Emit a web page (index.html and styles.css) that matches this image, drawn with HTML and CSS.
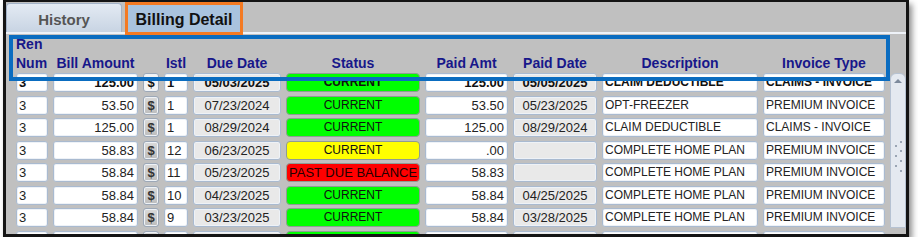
FILE: index.html
```html
<!DOCTYPE html>
<html lang="en">
<head>
  <meta charset="UTF-8">
  <title>Billing Detail</title>
  <link rel="stylesheet" href="styles.css">
</head>
<body>

  <div class="frame">
    <div class="tabs">
      <div class="tab">History</div>
      <div class="tab active">Billing Detail</div>
    </div>

    <div class="panel">
      <div class="highlight"></div>

      <div class="table-wrap">
        <div class="table">
          <div class="grid head">
            <div class="left">Ren<br>Num</div>
            <div>Bill Amount</div>
            <div></div>
            <div>Istl</div>
            <div>Due Date</div>
            <div>Status</div>
            <div>Paid Amt</div>
            <div>Paid Date</div>
            <div>Description</div>
            <div>Invoice Type</div>
          </div>
          <div class="rows" id="rows"></div>
        </div>

        <div class="scrollbar">
          <div class="sb-up"></div>
          <svg class="sb-grip" width="14" height="34" viewBox="0 0 14 34">
            <g fill="#9aa5b4">
              <rect x="9" y="0" width="2" height="2"/>
              <rect x="4" y="4" width="2" height="2"/>
              <rect x="9" y="9" width="2" height="2"/>
              <rect x="4" y="14" width="2" height="2"/>
              <rect x="9" y="19" width="2" height="2"/>
              <rect x="4" y="24" width="2" height="2"/>
              <rect x="9" y="29" width="2" height="2"/>
            </g>
          </svg>
        </div>
      </div>
    </div>
  </div>

  <script>
    // billing rows: ren, bill, istl, due, status, color, paid, paidDate, desc, invoice
    const billingData = [
      ['3', '125.00', '1', '05/03/2025', 'CURRENT', 'green', '125.00', '05/05/2025', 'CLAIM DEDUCTIBLE', 'CLAIMS - INVOICE'],
      ['3', '53.50', '1', '07/23/2024', 'CURRENT', 'green', '53.50', '05/23/2025', 'OPT-FREEZER', 'PREMIUM INVOICE'],
      ['3', '125.00', '1', '08/29/2024', 'CURRENT', 'green', '125.00', '08/29/2024', 'CLAIM DEDUCTIBLE', 'CLAIMS - INVOICE'],
      ['3', '58.83', '12', '06/23/2025', 'CURRENT', 'yellow', '.00', '', 'COMPLETE HOME PLAN', 'PREMIUM INVOICE'],
      ['3', '58.84', '11', '05/23/2025', 'PAST DUE BALANCE', 'red', '58.83', '', 'COMPLETE HOME PLAN', 'PREMIUM INVOICE'],
      ['3', '58.84', '10', '04/23/2025', 'CURRENT', 'green', '58.84', '04/25/2025', 'COMPLETE HOME PLAN', 'PREMIUM INVOICE'],
      ['3', '58.84', '9', '03/23/2025', 'CURRENT', 'green', '58.84', '03/28/2025', 'COMPLETE HOME PLAN', 'PREMIUM INVOICE'],
      // next row is cut off by the window edge, only its top shows
      ['', '', '', '', '', 'green', '', '', '', '']
    ];

    function makeCell(text, className) {
      const cell = document.createElement('div');
      cell.className = 'cell ' + className;
      cell.textContent = text;
      return cell;
    }

    function renderRows() {
      const rowsContainer = document.getElementById('rows');
      rowsContainer.innerHTML = '';

      billingData.forEach((r, i) => {
        const row = document.createElement('div');
        row.classList.add('grid', 'row');
        if (i === 0) row.classList.add('selected');

        row.appendChild(makeCell(r[0], ''));
        row.appendChild(makeCell(r[1], 'num'));
        row.appendChild(makeCell(r[0] ? '$' : '', 'dollar'));
        row.appendChild(makeCell(r[2], ''));
        row.appendChild(makeCell(r[3], 'gray'));
        row.appendChild(makeCell(r[4], 'status ' + r[5]));
        row.appendChild(makeCell(r[6], 'num'));
        row.appendChild(makeCell(r[7], 'gray'));
        row.appendChild(makeCell(r[8], 'upper'));
        row.appendChild(makeCell(r[9], 'upper'));

        rowsContainer.appendChild(row);
      });
    }

    renderRows();
  </script>

</body>
</html>
```

FILE: styles.css
```css
body {
  margin: 0;
  background-color: #fff;
  font-family: "Liberation Sans", Arial, sans-serif;
}

.frame {
  margin-left: 3px;
  width: 906px;
  height: 237px;
  box-sizing: border-box;
  border: 3px solid #141414;
  border-top-width: 2px;
  background-color: #c0c0c0;
  box-shadow: 3px 4px 6px rgba(0, 0, 0, 0.45);
  overflow: hidden;
}

/* tabs */
.tabs {
  display: flex;
  align-items: flex-start;
  height: 30px;
}

.tab {
  margin-top: 1px;
  width: 116px;
  height: 29px;
  box-sizing: border-box;
  padding-top: 2px;
  display: flex;
  align-items: center;
  justify-content: center;
  font-size: 15px;
  font-weight: bold;
  color: #555;
  background: linear-gradient(#e3eaf3, #c8d4e3);
  border: 1px solid #a3b3c8;
  border-bottom: none;
  border-radius: 4px 4px 0 0;
}

.tab.active {
  margin-top: 0;
  margin-left: 3px;
  width: 118px;
  height: 33px;
  border: 3px solid #f47a22;
  border-radius: 0;
  background: #a9c3de;
  color: #111;
  font-size: 16px;
  position: relative;
  z-index: 2;
}

/* panel */
.panel {
  position: relative;
  border-top: 2px solid #eef2f8;
}

.highlight {
  position: absolute;
  left: 3px;
  top: 1px;
  width: 881px;
  height: 46px;
  box-sizing: border-box;
  border: 4px solid #0a6cc0;
  z-index: 3;
}

.table-wrap {
  display: flex;
  padding-left: 10px;
}

.table {
  width: 869px;
}

.grid {
  display: grid;
  grid-template-columns: 32px 85px 16px 24px 88px 134px 83px 84px 156px 122px;
  column-gap: 5px;
}

.head {
  height: 39px;
  align-items: end;
  line-height: 19px;
  font-size: 14px;
  font-weight: bold;
  color: #17178a;
  text-align: center;
  white-space: nowrap;
}

.head .left {
  text-align: left;
}

.rows {
  display: flex;
  flex-direction: column;
  gap: 3.5px;
}

.cell {
  height: 19px;
  box-sizing: border-box;
  padding: 0 2px;
  border: 1px solid #a9bad0;
  border-radius: 3px;
  background-color: #fff;
  box-shadow: inset 0 0 0 1px #eef2f7;
  font-size: 13px;
  line-height: 17px;
  color: #222;
  white-space: nowrap;
  overflow: hidden;
}

.num {
  text-align: right;
  padding-right: 3px;
}

.gray {
  background-color: #e9e9e9;
  text-align: center;
}

.upper {
  font-size: 12px;
}

.dollar {
  padding: 0;
  text-align: center;
  font-weight: bold;
  color: #333;
  background: linear-gradient(#dadada, #bdbdbd);
  border-color: #9ca8b8;
}

.status {
  text-align: center;
  font-size: 12px;
  color: #111;
  border-radius: 4px;
  border-color: #8f9c94;
  box-shadow: none;
}

.status.green {
  background-color: #00ff00;
}

.status.yellow {
  background-color: #ffff00;
}

.status.red {
  background-color: #ff0000;
  font-size: 13px;
  color: #200;
}

.row.selected .cell {
  font-weight: bold;
  color: #111;
}

.row.selected .dollar {
  background: #f4f4f4;
}

/* scrollbar */
.scrollbar {
  margin-left: 5px;
  margin-top: 39px;
  width: 16px;
  height: 155px;
  box-sizing: border-box;
  background-color: #e4e9f0;
  border: 1px solid #b6c2d2;
  border-radius: 6px 6px 0 0;
}

.sb-up {
  height: 14px;
  display: flex;
  align-items: center;
  justify-content: center;
}

.sb-up::before {
  content: "";
  border-left: 4px solid transparent;
  border-right: 4px solid transparent;
  border-bottom: 4px solid #7d8a9c;
}

.sb-grip {
  display: block;
  margin-top: 53px;
}
```
